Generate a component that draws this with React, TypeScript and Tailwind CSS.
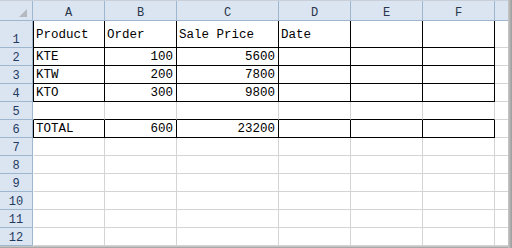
import React from 'react';

const COLS = [
  { key: 'A', width: 'w-[72px]' },
  { key: 'B', width: 'w-[72px]' },
  { key: 'C', width: 'w-[102px]' },
  { key: 'D', width: 'w-[72px]' },
  { key: 'E', width: 'w-[72px]' },
  { key: 'F', width: 'w-[72px]' },
];

type Row = { n: number; cells: (string | number)[] };

const ROWS: Row[] = [
  { n: 1, cells: ['Product', 'Order', 'Sale Price', 'Date', '', ''] },
  { n: 2, cells: ['KTE', 100, 5600, '', '', ''] },
  { n: 3, cells: ['KTW', 200, 7800, '', '', ''] },
  { n: 4, cells: ['KTO', 300, 9800, '', '', ''] },
  { n: 5, cells: ['', '', '', '', '', ''] },
  { n: 6, cells: ['TOTAL', 600, 23200, '', '', ''] },
  { n: 7, cells: [] },
  { n: 8, cells: [] },
  { n: 9, cells: [] },
  { n: 10, cells: [] },
  { n: 11, cells: [] },
  { n: 12, cells: [] },
];

// rows that carry the black "all borders" formatting
const boxed = new Set([1, 2, 3, 4, 6]);

const mono = { fontFamily: '"Liberation Mono", "DejaVu Sans Mono", monospace' };

function HeaderRow() {
  return (
    <div className="flex h-[21px] border-t border-[#c9cfd8] bg-[#dbe5f1]">
      <div className="relative w-[33px] border-r border-b border-[#9eb6ce]">
        <svg className="absolute left-[18px] top-[7px]" width="10" height="10" viewBox="0 0 10 10">
          <polygon points="9,1 9,9 1,9" fill="#b4b9bf" />
        </svg>
      </div>
      {COLS.map((c) => (
        <div
          key={c.key}
          className={`${c.width} flex items-end justify-center pb-[1px] border-r border-b border-[#9eb6ce] text-[12px] leading-none text-[#27364a]`}
          style={mono}
        >
          {c.key}
        </div>
      ))}
      <div className="w-[13px] border-b border-[#9eb6ce]" />
    </div>
  );
}

function SheetRow({ row }: { row: Row }) {
  const isBoxed = boxed.has(row.n);
  const bottomBlack = isBoxed || boxed.has(row.n + 1);
  const height = row.n === 1 ? 'h-[27px]' : 'h-[18px]';

  return (
    <div className={`flex ${height}`}>
      <div
        className="w-[33px] flex items-end justify-center pb-[1px] bg-[#dbe5f1] border-r border-b border-[#9eb6ce] text-[12px] leading-none text-[#1f3a5f]"
        style={mono}
      >
        {row.n}
      </div>
      {COLS.map((c, i) => {
        const v = row.cells[i] ?? '';
        const numeric = typeof v === 'number';
        return (
          <div
            key={c.key}
            className={[
              c.width,
              'flex items-center pt-[2px] border-r border-b text-[12.5px] leading-none text-black',
              i === 0 ? (isBoxed ? 'border-l border-l-black' : 'border-l border-l-white') : '',
              isBoxed ? 'border-r-black' : 'border-r-[#d4d4d4]',
              bottomBlack ? 'border-b-black' : 'border-b-[#d4d4d4]',
              numeric ? 'justify-end pr-[3px]' : 'justify-start pl-[2px]',
            ].join(' ')}
            style={mono}
          >
            {v}
          </div>
        );
      })}
      <div className="w-[13px] border-b border-[#d4d4d4]" />
    </div>
  );
}

export default function App() {
  return (
    <div className="w-[512px] h-[248px] flex bg-white overflow-hidden">
      <div className="w-[508px] flex flex-col">
        <HeaderRow />
        {ROWS.map((r) => (
          <SheetRow key={r.n} row={r} />
        ))}
        <div className="flex-1 border-t border-[#c4c4c4] bg-[#a9a9a9]" />
      </div>
      <div className="w-[4px] bg-gradient-to-r from-[#c8c8c8] to-[#9c9c9c]" />
    </div>
  );
}
